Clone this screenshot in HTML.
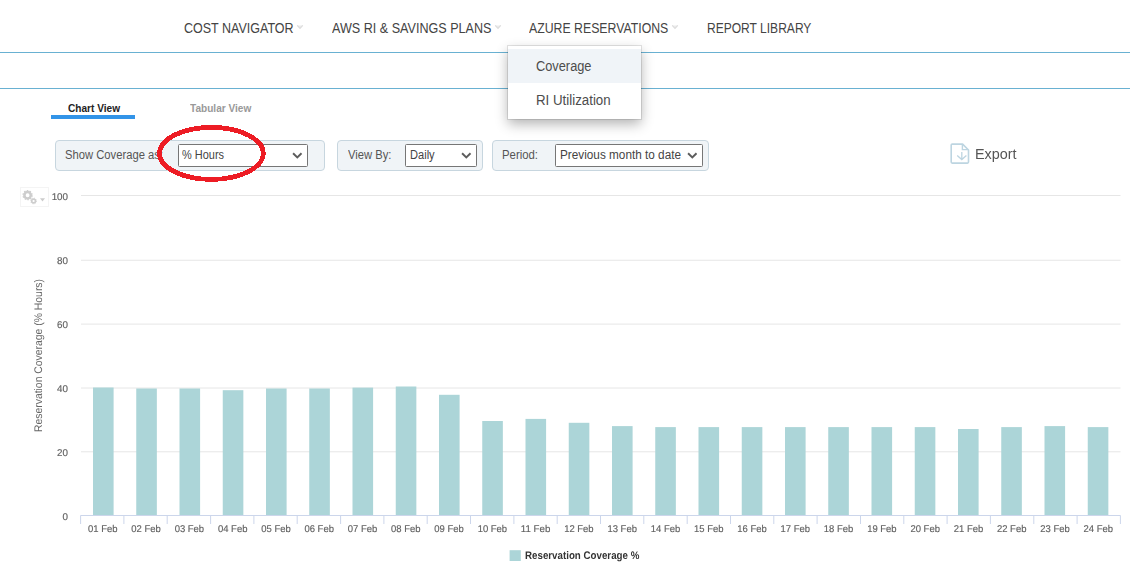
<!DOCTYPE html>
<html><head><meta charset="utf-8"><title>Azure Reservations Coverage</title>
<style>
html,body{margin:0;padding:0;background:#fff;}
body{width:1135px;height:579px;position:relative;overflow:hidden;font-family:"Liberation Sans",Arial,sans-serif;}
.abs{position:absolute;white-space:nowrap;}
.nav,.tab,.fl,.sx,.dd span,.sel span{transform-origin:0 50%;}
.nav{position:absolute;top:20px;font-size:14px;line-height:16px;color:#444;white-space:nowrap;}
.car{position:absolute;top:24px;width:8px;height:6px;}
.hr{position:absolute;left:0;width:1130px;height:1px;background:#69b1d2;}
.dd{position:absolute;left:508px;top:46px;width:133px;height:73px;background:#fff;box-shadow:0 0 0 1px rgba(0,0,0,.1),0 5px 12px rgba(0,0,0,.3);}
.dd div{position:absolute;left:0;width:133px;height:34px;}
.dd span{position:absolute;left:28px;top:9px;font-size:14px;line-height:16px;color:#4c4c4c;white-space:nowrap;}
.tab{position:absolute;top:102px;font-size:11px;line-height:13px;font-weight:bold;white-space:nowrap;}
.fb{position:absolute;top:140px;height:29px;border:1px solid #c7d6df;border-radius:4px;background:#f0f4f7;}
.fl{position:absolute;top:148px;font-size:12.5px;line-height:14px;color:#555;white-space:nowrap;}
.sel{position:absolute;top:144px;height:20.5px;border:1px solid #767676;border-radius:1.5px;background:#fff;}
.sel span{position:absolute;left:2.4px;top:2.8px;font-size:12.5px;line-height:14px;color:#444;white-space:nowrap;}
.sel svg{position:absolute;right:4.1px;top:6.5px;}
svg text{font-family:"Liberation Sans",Arial,sans-serif;text-rendering:geometricPrecision;}
</style></head><body>
<div class="nav" id="n1" style="left:183.5px;transform:scaleX(0.8935)">COST NAVIGATOR</div><svg class="car" style="left:296px" viewBox="0 0 8 6"><path d="M1.2 1.4L4 4.3L6.8 1.4" fill="#ececec" stroke="#dcdcdc" stroke-width="1.2"/></svg>
<div class="nav" id="n2" style="left:331.5px;transform:scaleX(0.8986)">AWS RI &amp; SAVINGS PLANS</div><svg class="car" style="left:494px" viewBox="0 0 8 6"><path d="M1.2 1.4L4 4.3L6.8 1.4" fill="#ececec" stroke="#dcdcdc" stroke-width="1.2"/></svg>
<div class="nav" id="n3" style="left:528.5px;transform:scaleX(0.8778)">AZURE RESERVATIONS</div><svg class="car" style="left:671px" viewBox="0 0 8 6"><path d="M1.2 1.4L4 4.3L6.8 1.4" fill="#ececec" stroke="#dcdcdc" stroke-width="1.2"/></svg>
<div class="nav" id="n4" style="left:706.5px;transform:scaleX(0.86)">REPORT LIBRARY</div>
<div class="hr" style="top:52px"></div>
<div class="hr" style="top:88px"></div>
<div class="dd"><div style="top:3px;background:#f0f4f8"><span id="d1" style="transform:scaleX(0.914)">Coverage</span></div><div style="top:37px"><span id="d2" style="transform:scaleX(0.95)">RI Utilization</span></div></div>

<div class="tab" id="t1" style="left:68px;color:#222;transform:scaleX(0.918)">Chart View</div>
<div class="abs" style="left:51px;top:115.4px;width:84px;height:3.4px;background:#3294e8"></div>
<div class="tab" id="t2" style="left:190px;color:#999;transform:scaleX(0.917)">Tabular View</div>

<div class="fb" style="left:55px;width:268px"></div>
<div class="fl" id="f1" style="left:64.6px;transform:scaleX(0.8988)">Show Coverage as:</div>
<div class="sel" style="left:178px;width:128px"><span id="s1" style="left:3.4px;transform:scaleX(0.8765)">% Hours</span><svg width="10.6" height="7.4" viewBox="0 0 10 7"><path d="M1 1.2L5 5.2L9 1.2" fill="none" stroke="#5c5c5c" stroke-width="1.8"/></svg></div>

<div class="fb" style="left:337px;width:144px"></div>
<div class="fl" id="f2" style="left:347.8px;transform:scaleX(0.8969)">View By:</div>
<div class="sel" style="left:405px;width:70px"><span id="s2" style="left:3.5px;transform:scaleX(0.8881)">Daily</span><svg width="10.6" height="7.4" viewBox="0 0 10 7"><path d="M1 1.2L5 5.2L9 1.2" fill="none" stroke="#5c5c5c" stroke-width="1.8"/></svg></div>

<div class="fb" style="left:492px;width:215px"></div>
<div class="fl" id="f3" style="left:501.6px;transform:scaleX(0.9087)">Period:</div>
<div class="sel" style="left:555px;width:145.5px"><span id="s3" style="left:3.6px;transform:scaleX(0.9413)">Previous month to date</span><svg width="10.6" height="7.4" viewBox="0 0 10 7"><path d="M1 1.2L5 5.2L9 1.2" fill="none" stroke="#5c5c5c" stroke-width="1.8"/></svg></div>

<svg class="abs" style="left:949px;top:142px" width="23" height="24" viewBox="0 0 23 24"><path d="M3.2 2.1H13.6L19.5 8V20.1Q19.5 21.1 18.5 21.1H3.2Q2.2 21.1 2.2 20.1V3.1Q2.2 2.1 3.2 2.1Z" fill="#fff" stroke="#bdd5e1" stroke-width="1.6" stroke-linejoin="round"/><path d="M13.4 2.4V7.6H19.2" fill="none" stroke="#bdd5e1" stroke-width="1.4"/><path d="M12.8 9.9V17.4M8.2 13.4L12.8 17.6L17.4 13.4" fill="none" stroke="#bdd5e1" stroke-width="1.3"/></svg>
<div class="abs" id="ex" style="left:974.8px;top:146px;font-size:14px;line-height:17px;color:#555;will-change:transform;transform:scaleX(1.028);transform-origin:0 50%">Export</div>

<svg class="abs" style="left:0;top:0" width="1135" height="579" viewBox="0 0 1135 579">
<ellipse shape-rendering="crispEdges" cx="211.4" cy="153.4" rx="51.9" ry="26" fill="none" stroke="#ed1c24" stroke-width="4.8"/>
<rect x="20.5" y="187.5" width="28" height="19" fill="none" stroke="#f4f4f4"/>
<g fill="none" stroke="#cdcdcd"><circle cx="27.6" cy="195.2" r="3.2" stroke-width="2.5"/><circle cx="27.6" cy="195.2" r="4.6" stroke-width="1.1" stroke-dasharray="1.6 1.29"/><circle cx="33.6" cy="201" r="1.9" stroke-width="1.6"/><circle cx="33.6" cy="201" r="2.9" stroke-width="0.8" stroke-dasharray="1.1 1.18"/></g>
<path d="M40 198.3H45L42.5 201.6Z" fill="#ccc"/>
<path d="M81 195.5H1120.5M81 260.25H1120.5M81 324.1H1120.5M81 388.0H1120.5M81 451.8H1120.5" stroke="#e6e6e6" stroke-width="1" fill="none"/>
<g fill="#acd5d8"><rect x="93.00" y="387.5" width="20.6" height="128.0"/><rect x="136.25" y="388.5" width="20.6" height="127.0"/><rect x="179.50" y="388.5" width="20.6" height="127.0"/><rect x="222.75" y="390.2" width="20.6" height="125.3"/><rect x="266.00" y="388.5" width="20.6" height="127.0"/><rect x="309.25" y="388.5" width="20.6" height="127.0"/><rect x="352.50" y="387.6" width="20.6" height="127.9"/><rect x="395.75" y="386.5" width="20.6" height="129.0"/><rect x="439.00" y="394.8" width="20.6" height="120.7"/><rect x="482.25" y="421" width="20.6" height="94.5"/><rect x="525.50" y="418.9" width="20.6" height="96.6"/><rect x="568.75" y="422.8" width="20.6" height="92.7"/><rect x="612.00" y="426.1" width="20.6" height="89.4"/><rect x="655.25" y="427.1" width="20.6" height="88.4"/><rect x="698.50" y="427.1" width="20.6" height="88.4"/><rect x="741.75" y="427.1" width="20.6" height="88.4"/><rect x="785.00" y="427.1" width="20.6" height="88.4"/><rect x="828.25" y="427.1" width="20.6" height="88.4"/><rect x="871.50" y="427.1" width="20.6" height="88.4"/><rect x="914.75" y="427.1" width="20.6" height="88.4"/><rect x="958.00" y="429" width="20.6" height="86.5"/><rect x="1001.25" y="427.1" width="20.6" height="88.4"/><rect x="1044.50" y="426.1" width="20.6" height="89.4"/><rect x="1087.75" y="427.1" width="20.6" height="88.4"/></g>
<path d="M80.5 515.5H1120.5M80.6 515.5V524M123.9 515.5V524M167.2 515.5V524M210.6 515.5V524M253.9 515.5V524M297.2 515.5V524M340.6 515.5V524M383.9 515.5V524M427.2 515.5V524M470.5 515.5V524M513.9 515.5V524M557.2 515.5V524M600.5 515.5V524M643.8 515.5V524M687.2 515.5V524M730.5 515.5V524M773.8 515.5V524M817.1 515.5V524M860.5 515.5V524M903.8 515.5V524M947.1 515.5V524M990.4 515.5V524M1033.8 515.5V524M1077.1 515.5V524M1120.4 515.5V524" stroke="#ccd6eb" stroke-width="1" fill="none"/>
<g font-size="9.8" fill="#606060" stroke="#606060" stroke-width="0.15" text-anchor="end" id="yl"><text x="68" y="199.9">100</text><text x="68" y="263.9">80</text><text x="68" y="328.0">60</text><text x="68" y="392.0">40</text><text x="68" y="456.1">20</text><text x="68" y="520.1">0</text></g>
<g font-size="9.8" fill="#606060" stroke="#606060" stroke-width="0.15" text-anchor="middle" id="xl"><text x="102.8" y="532" textLength="29.5" lengthAdjust="spacingAndGlyphs">01 Feb</text><text x="146.1" y="532" textLength="29.5" lengthAdjust="spacingAndGlyphs">02 Feb</text><text x="189.4" y="532" textLength="29.5" lengthAdjust="spacingAndGlyphs">03 Feb</text><text x="232.7" y="532" textLength="29.5" lengthAdjust="spacingAndGlyphs">04 Feb</text><text x="276.0" y="532" textLength="29.5" lengthAdjust="spacingAndGlyphs">05 Feb</text><text x="319.2" y="532" textLength="29.5" lengthAdjust="spacingAndGlyphs">06 Feb</text><text x="362.5" y="532" textLength="29.5" lengthAdjust="spacingAndGlyphs">07 Feb</text><text x="405.8" y="532" textLength="29.5" lengthAdjust="spacingAndGlyphs">08 Feb</text><text x="449.1" y="532" textLength="29.5" lengthAdjust="spacingAndGlyphs">09 Feb</text><text x="492.4" y="532" textLength="29.5" lengthAdjust="spacingAndGlyphs">10 Feb</text><text x="535.6" y="532" textLength="29.5" lengthAdjust="spacingAndGlyphs">11 Feb</text><text x="578.9" y="532" textLength="29.5" lengthAdjust="spacingAndGlyphs">12 Feb</text><text x="622.2" y="532" textLength="29.5" lengthAdjust="spacingAndGlyphs">13 Feb</text><text x="665.5" y="532" textLength="29.5" lengthAdjust="spacingAndGlyphs">14 Feb</text><text x="708.8" y="532" textLength="29.5" lengthAdjust="spacingAndGlyphs">15 Feb</text><text x="752.1" y="532" textLength="29.5" lengthAdjust="spacingAndGlyphs">16 Feb</text><text x="795.3" y="532" textLength="29.5" lengthAdjust="spacingAndGlyphs">17 Feb</text><text x="838.6" y="532" textLength="29.5" lengthAdjust="spacingAndGlyphs">18 Feb</text><text x="881.9" y="532" textLength="29.5" lengthAdjust="spacingAndGlyphs">19 Feb</text><text x="925.2" y="532" textLength="29.5" lengthAdjust="spacingAndGlyphs">20 Feb</text><text x="968.5" y="532" textLength="29.5" lengthAdjust="spacingAndGlyphs">21 Feb</text><text x="1011.7" y="532" textLength="29.5" lengthAdjust="spacingAndGlyphs">22 Feb</text><text x="1055.0" y="532" textLength="29.5" lengthAdjust="spacingAndGlyphs">23 Feb</text><text x="1098.3" y="532" textLength="29.5" lengthAdjust="spacingAndGlyphs">24 Feb</text></g>
<text id="yt" transform="translate(42,355.5) rotate(-90)" text-anchor="middle" font-size="11" fill="#666" textLength="153" lengthAdjust="spacingAndGlyphs">Reservation Coverage (% Hours)</text>
<rect x="509.6" y="550.2" width="11.2" height="10.8" fill="#acd5d8"/>
<text id="lg" x="525" y="559" font-size="11" font-weight="bold" fill="#333" textLength="114.3" lengthAdjust="spacingAndGlyphs">Reservation Coverage %</text>
</svg>
</body></html>
